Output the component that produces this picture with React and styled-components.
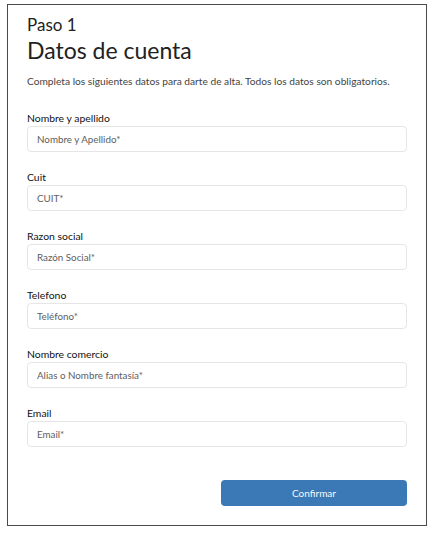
import React from 'react';
import styled, { createGlobalStyle } from 'styled-components';

const GlobalStyle = createGlobalStyle`
  body {
    margin: 0;
    background: #fff;
    font-family: Lato, "Open Sans", sans-serif;
  }
`;

const Card = styled.div`
  box-sizing: border-box;
  width: 420px;
  height: 522px;
  margin: 4px 0 0 7px;
  border: 1.5px solid #4a4a4a;
  padding: 10px 19px 0 19px;
  display: flex;
  flex-direction: column;
  color: #222;
`;

const Step = styled.div`
  font-size: 17px;
  line-height: 20px;
`;

const Title = styled.h1`
  margin: 0;
  font-size: 23px;
  font-weight: 400;
  line-height: 30px;
`;

const Intro = styled.p`
  margin: 9px 0 24px 0;
  font-size: 10.2px;
  line-height: 14px;
  color: #444;
`;

const Field = styled.div`
  display: flex;
  flex-direction: column;
  gap: 1px;
  margin-bottom: 19px;
`;

const Label = styled.label`
  font-size: 10.4px;
  font-weight: 400;
  line-height: 13px;
  color: #111;
`;

const Input = styled.input`
  box-sizing: border-box;
  width: 100%;
  height: 26px;
  border: 1px solid #e6e6e6;
  border-radius: 4px;
  padding: 0 9px;
  font-family: inherit;
  font-size: 9.8px;
  color: #222;
  outline: none;
  &::placeholder {
    color: #5e5e5e;
  }
`;

const Actions = styled.div`
  display: flex;
  justify-content: flex-end;
  margin-top: 14px;
`;

const Button = styled.button`
  width: 186px;
  height: 26px;
  border: none;
  border-radius: 4px;
  background: #3a79b6;
  color: #f4f8fc;
  font-family: inherit;
  font-size: 10px;
  cursor: pointer;
`;

const fields = [
  { label: 'Nombre y apellido', placeholder: 'Nombre y Apellido*' },
  { label: 'Cuit', placeholder: 'CUIT*' },
  { label: 'Razon social', placeholder: 'Razón Social*' },
  { label: 'Telefono', placeholder: 'Teléfono*' },
  { label: 'Nombre comercio', placeholder: 'Alias o Nombre fantasía*' },
  { label: 'Email', placeholder: 'Email*' },
];

export default function App() {
  return (
    <>
      <GlobalStyle />
      <Card>
        <Step>Paso 1</Step>
        <Title>Datos de cuenta</Title>
        <Intro>Completa los siguientes datos para darte de alta. Todos los datos son obligatorios.</Intro>
        {fields.map((f) => (
          <Field key={f.label}>
            <Label>{f.label}</Label>
            <Input placeholder={f.placeholder} />
          </Field>
        ))}
        <Actions>
          <Button>Confirmar</Button>
        </Actions>
      </Card>
    </>
  );
}
